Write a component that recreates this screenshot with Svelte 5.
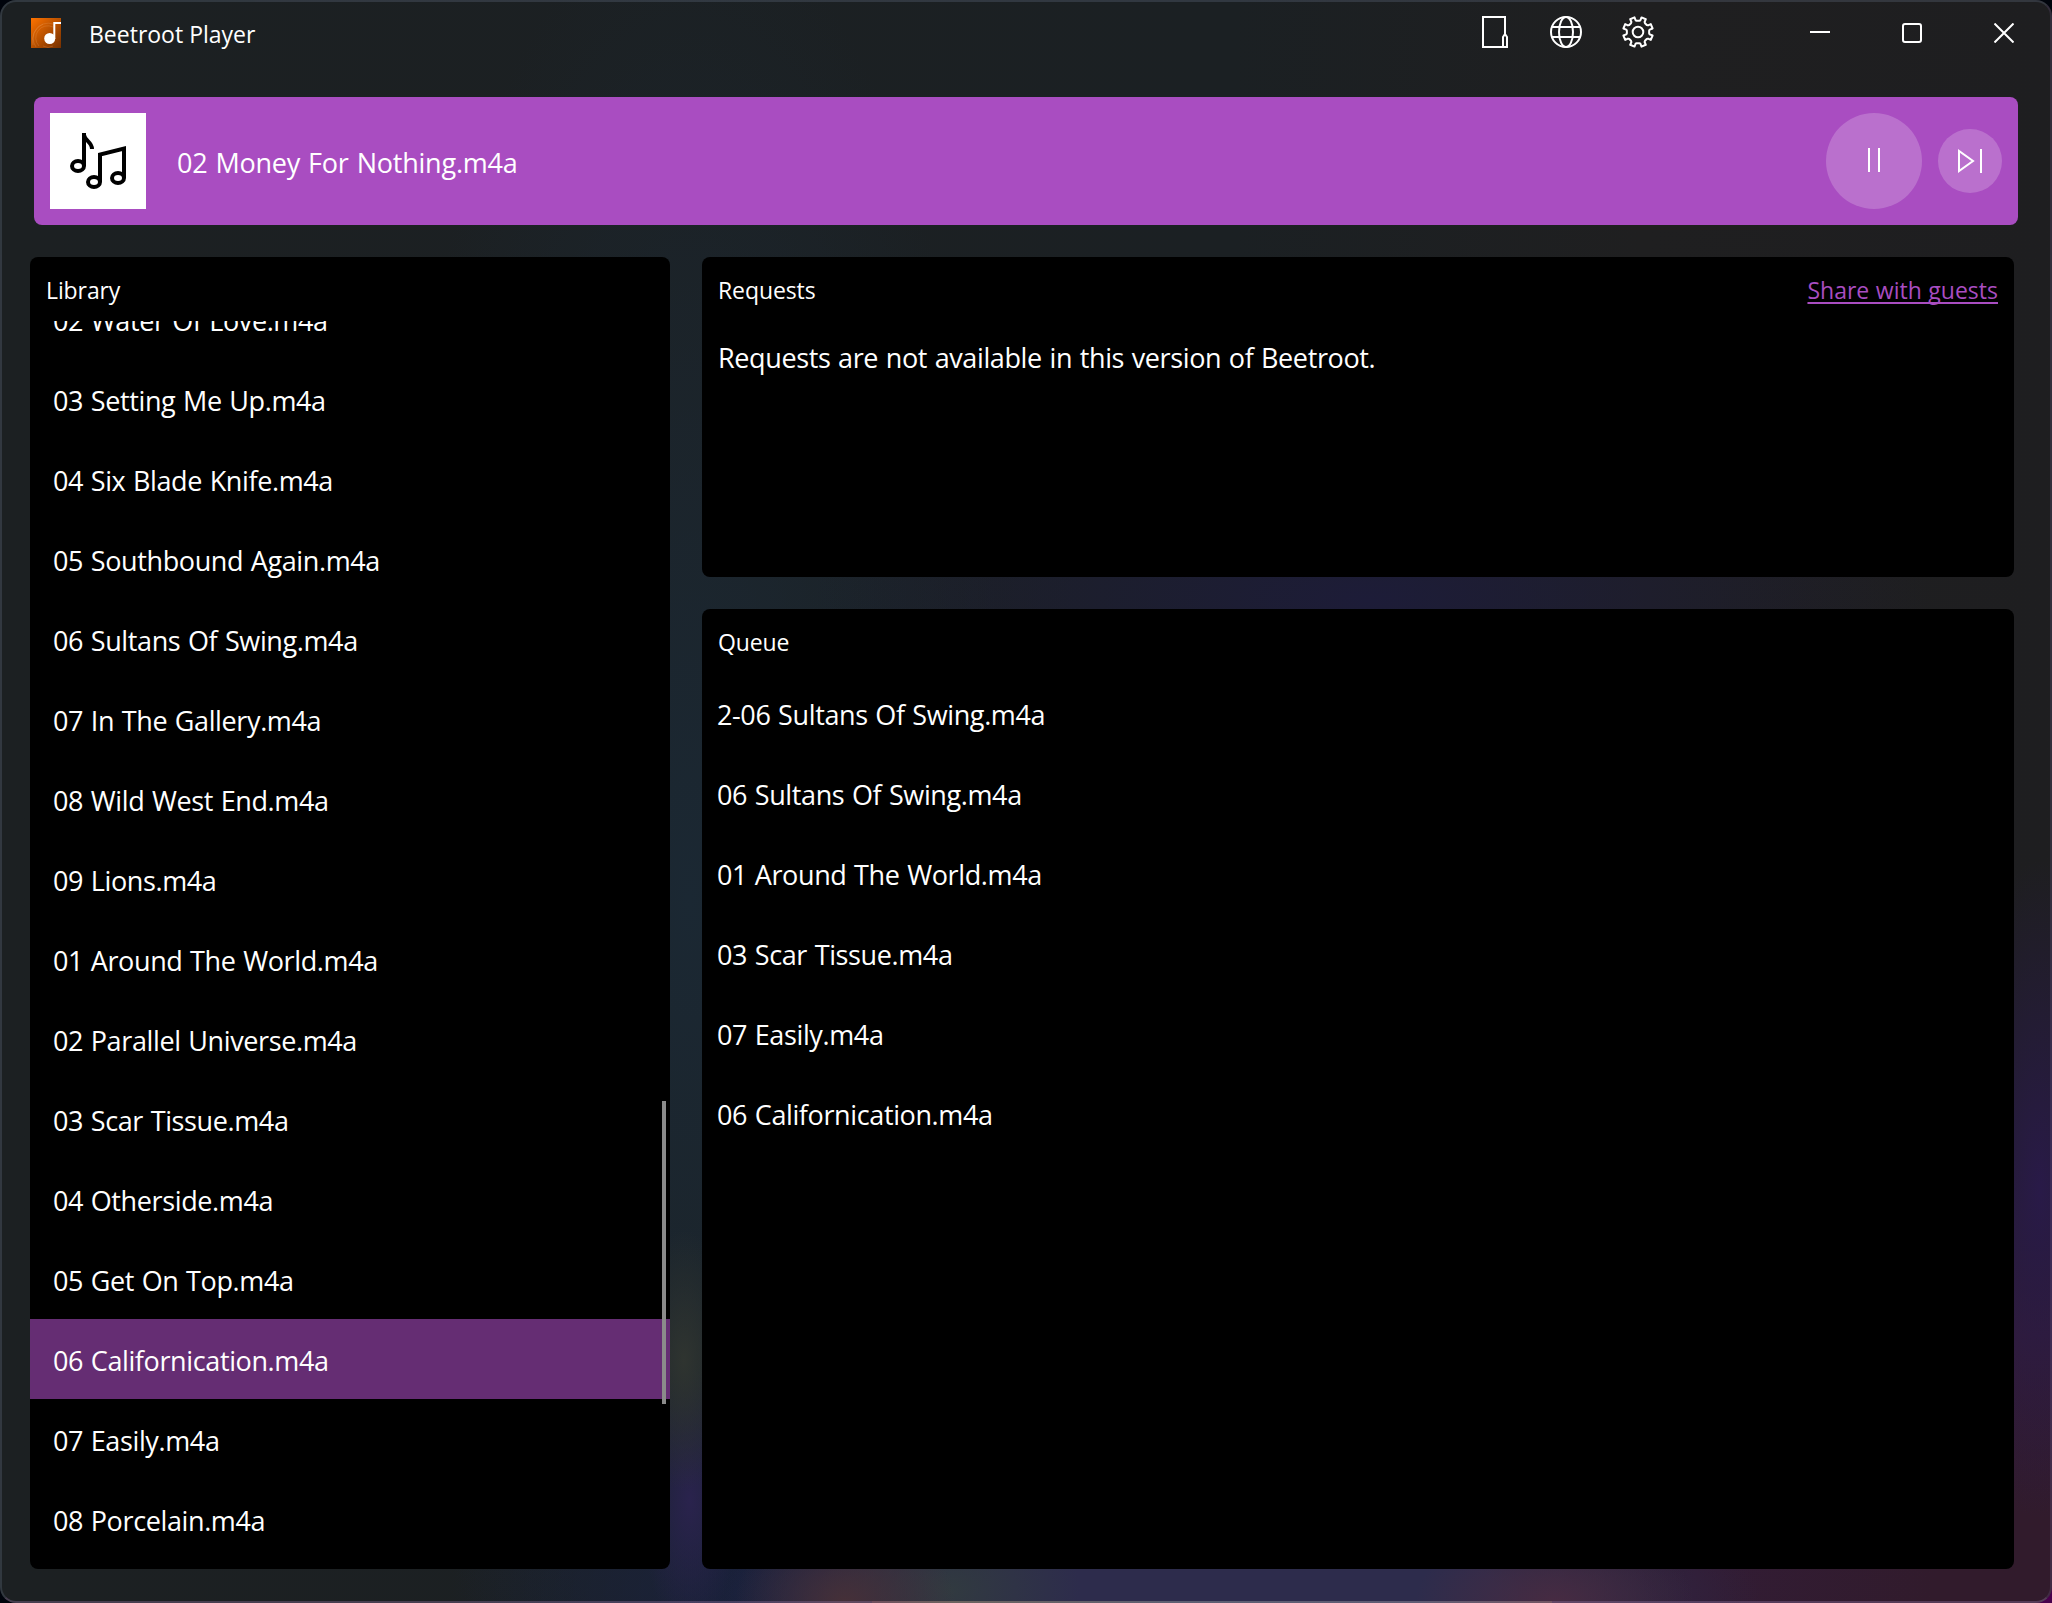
<svelte:options runes={true} />
<script lang="ts">
  const library = [
    "02 Water Of Love.m4a",
    "03 Setting Me Up.m4a",
    "04 Six Blade Knife.m4a",
    "05 Southbound Again.m4a",
    "06 Sultans Of Swing.m4a",
    "07 In The Gallery.m4a",
    "08 Wild West End.m4a",
    "09 Lions.m4a",
    "01 Around The World.m4a",
    "02 Parallel Universe.m4a",
    "03 Scar Tissue.m4a",
    "04 Otherside.m4a",
    "05 Get On Top.m4a",
    "06 Californication.m4a",
    "07 Easily.m4a",
    "08 Porcelain.m4a",
  ];

  let queue = $state([
    "2-06 Sultans Of Swing.m4a",
    "06 Sultans Of Swing.m4a",
    "01 Around The World.m4a",
    "03 Scar Tissue.m4a",
    "07 Easily.m4a",
    "06 Californication.m4a",
  ]);
  let selected = $state(13);
  let playing = $state("02 Money For Nothing.m4a");

  const playNext = (): void => {
    const next = queue.shift();
    if (next) playing = next;
  };

  // cog outline centred on 16,16 with a notch at the top
  const cog = (teeth: number): string => {
    const points: string[] = [];
    const step = (Math.PI * 2) / teeth;
    const shape: [number, number][] = [
      [-0.36, 11.2],
      [-0.24, 12],
      [-0.2, 15],
      [0.2, 15],
      [0.24, 12],
      [0.36, 11.2],
    ];
    for (let i = 0; i < teeth; i++) {
      for (const [offset, radius] of shape) {
        const angle = (i + 0.5 + offset) * step - Math.PI / 2;
        points.push(`${(16 + Math.cos(angle) * radius).toFixed(2)},${(16 + Math.sin(angle) * radius).toFixed(2)}`);
      }
    }
    return points.join(" ");
  };
</script>

<div class="desktop">
  <main class="window">
    <header class="titlebar">
      <svg class="logo" viewBox="0 0 30 30">
        <defs>
          <linearGradient id="logo-fill" x1="0" y1="0" x2="1" y2="1">
            <stop offset="0" stop-color="#ff7300" />
            <stop offset="1" stop-color="#753000" />
          </linearGradient>
        </defs>
        <rect width="30" height="30" fill="url(#logo-fill)" />
        <g fill="none" stroke="#e59a58" stroke-opacity="0.4" stroke-width="0.7">
          <path d="M5 29A15 15 0 0 1 22 6" />
          <path d="M8 28A12 12 0 0 1 22 9" />
          <path d="M2 27A18 18 0 0 1 12 6" />
          <path d="M12 28a10 10 0 0 0 10 0" />
        </g>
        <circle cx="18.7" cy="20.5" r="5.5" fill="#fff" />
        <path d="M23.300 21V5H30" fill="none" stroke="#fff" stroke-width="2" />
      </svg>
      <h1>Beetroot Player</h1>
      <nav class="tools">
        <button aria-label="Mini player">
          <svg viewBox="0 0 32 32">
            <path d="M27 18V1H5v30h24V21l-2-3-2 3v10" />
          </svg>
        </button>
        <button aria-label="Language">
          <svg viewBox="0 0 32 32">
            <circle cx="16" cy="16" r="15" />
            <ellipse cx="16" cy="16" rx="7" ry="15" />
            <path d="M2 11h28M2 21h28" />
          </svg>
        </button>
        <button aria-label="Settings">
          <svg viewBox="0 0 32 32">
            <polygon points={cog(8)} stroke-linejoin="round" />
            <circle cx="16" cy="16" r="5.3" />
          </svg>
        </button>
      </nav>
      <div class="caption">
        <button aria-label="Minimize">
          <svg viewBox="0 0 20 20"><path d="M0 9h20" /></svg>
        </button>
        <button aria-label="Maximize">
          <svg viewBox="0 0 20 20"><rect x="1" y="1" width="18" height="18" rx="2" /></svg>
        </button>
        <button aria-label="Close">
          <svg viewBox="0 0 20 20"><path d="M0.5 0.5l19 19M19.5 0.5l-19 19" /></svg>
        </button>
      </div>
    </header>

    <section class="player">
      <div class="cover">
        <svg viewBox="0 0 96 96">
          <g fill="none" stroke="#000" stroke-width="4">
            <ellipse cx="28" cy="53" rx="6" ry="5" />
            <ellipse cx="44" cy="69" rx="6" ry="5" />
            <ellipse cx="68" cy="65" rx="6" ry="5" />
            <path d="M34 53V20M34 22c1 6 8 7 8 14M50 69V41.500L74 35.500V65" />
          </g>
        </svg>
      </div>
      <span class="track">{playing}</span>
      <button class="round large" aria-label="Pause">
        <svg viewBox="0 0 32 32"><path d="M11 3v24M21 3v24" /></svg>
      </button>
      <button class="round small" aria-label="Next" onclick={playNext}>
        <svg viewBox="0 0 32 32"><path d="M5 6v20l14-10zM27 4v24" /></svg>
      </button>
    </section>

    <div class="columns">
      <section class="panel library">
        <h2>Library</h2>
        <div class="viewport">
          <ul>
            {#each library as song, i}
              <li class:selected={i === selected}>
                <button onclick={() => (selected = i)}>{song}</button>
              </li>
            {/each}
          </ul>
          <div class="thumb"></div>
        </div>
      </section>

      <div class="side">
        <section class="panel requests">
          <div class="heading">
            <h2>Requests</h2>
            <a href="#share">Share with guests</a>
          </div>
          <p>Requests are not available in this version of Beetroot.</p>
        </section>
        <section class="panel queue">
          <h2>Queue</h2>
          <ul>
            {#each queue as song}
              <li>{song}</li>
            {/each}
          </ul>
        </section>
      </div>
    </div>
  </main>
</div>

<style>
  :global(body) {
    margin: 0;
    background: #05060c;
  }
  .desktop {
    position: relative;
    width: 2052px;
    height: 1603px;
    overflow: hidden;
    background: linear-gradient(135deg, #00040c 60%, #48004c);
  }
  /* bright edge of the wallpaper showing along the bottom border */
  .desktop::after {
    content: "";
    position: absolute;
    left: 872px;
    bottom: 0;
    width: 680px;
    height: 2px;
    background: linear-gradient(90deg, #70505e, #6c635f 12%, #5d5f72 45%, #5f5c74 80%, #735563);
  }
  .window {
    box-sizing: border-box;
    height: 100%;
    padding: 0 32px 32px 28px;
    display: flex;
    flex-direction: column;
    border: 2px solid rgba(120, 135, 160, 0.24);
    border-right-color: rgba(120, 100, 150, 0.24);
    border-bottom-color: rgba(150, 120, 165, 0.36);
    border-radius: 16px;
    color: #fff;
    font-family: "Open Sans", "Noto Sans", sans-serif;
    background:
      radial-gradient(ellipse 50px 130px at 684px 1360px, #2f3430, transparent),
      radial-gradient(ellipse 50px 130px at 690px 1500px, #2a234d, transparent),
      radial-gradient(ellipse 110px 90px at 845px 1603px, #463038, transparent),
      radial-gradient(ellipse 130px 100px at 950px 1590px, #313a40, transparent),
      radial-gradient(ellipse 140px 80px at 1555px 1603px, #472b42, transparent),
      radial-gradient(ellipse 520px 160px at 1240px 1600px, #2d2c4c 50%, transparent),
      radial-gradient(ellipse 90px 330px at 2040px 1190px, #291a48, transparent),
      radial-gradient(ellipse 600px 450px at 2052px 1603px, #311b2c 20%, #321c35 60%, transparent),
      radial-gradient(ellipse 560px 190px at 1370px 600px, #1d1c38, transparent),
      radial-gradient(ellipse 400px 260px at 850px 1600px, #192042, transparent),
      radial-gradient(ellipse 320px 1000px at 690px 900px, #1b2833, transparent),
      linear-gradient(90deg, #1c2022 0%, #1b2023 60%, #1f1f20 80%, #1e1e20 100%);
    background-origin: border-box;
  }
  h1,
  h2,
  p,
  ul {
    margin: 0;
    padding: 0;
    font-weight: 400;
  }
  ul {
    list-style: none;
  }
  button {
    padding: 0;
    border: 0;
    background: none;
    color: inherit;
    font: inherit;
    letter-spacing: inherit;
    word-spacing: inherit;
    cursor: pointer;
  }
  svg {
    display: block;
  }
  button svg {
    width: 32px;
    height: 32px;
    fill: none;
    stroke: #fff;
    stroke-width: 2;
  }
  .titlebar {
    flex: none;
    height: 95px;
    display: flex;
    align-items: flex-start;
  }
  .logo {
    width: 30px;
    height: 30px;
    margin: 16px 0 0 1px;
  }
  .titlebar h1 {
    margin: 16px 0 0 28px;
    font-size: 23px;
    line-height: 32px;
    letter-spacing: 0;
  }
  .tools {
    margin: 14px 0 0 auto;
    display: flex;
    gap: 40px;
  }
  .caption {
    margin: 21px -32px 0 120px;
    display: flex;
  }
  .caption button {
    width: 92px;
    display: flex;
    justify-content: center;
  }
  .caption svg {
    width: 20px;
    height: 20px;
  }
  .player {
    flex: none;
    height: 128px;
    box-sizing: border-box;
    margin: 0 0 32px 4px;
    padding: 16px;
    display: flex;
    align-items: center;
    border-radius: 8px;
    background: #a94dc1;
  }
  .cover {
    width: 96px;
    height: 96px;
    background: #fff;
  }
  .track {
    margin: 3px auto 0 31px;
    font-size: 27px;
    letter-spacing: -0.22px;
    word-spacing: 1.2px;
  }
  .round {
    display: grid;
    place-items: center;
    border-radius: 50%;
    background: rgba(255, 255, 255, 0.2);
  }
  .large {
    width: 96px;
    height: 96px;
    margin-right: 16px;
  }
  .small {
    width: 64px;
    height: 64px;
  }
  .columns {
    flex: 1;
    min-height: 0;
    margin-right: 4px;
    display: grid;
    grid-template-columns: 640px 1fr;
    gap: 32px;
  }
  .side {
    display: grid;
    grid-template-rows: 320px 1fr;
    gap: 32px;
  }
  .panel {
    border-radius: 8px;
    background: #000;
    overflow: hidden;
  }
  h2,
  .heading a {
    font-size: 23px;
    line-height: 32px;
    letter-spacing: -0.1px;
  }
  h2 {
    padding: 17px 16px 15px;
  }
  .heading {
    display: flex;
    justify-content: space-between;
  }
  .heading a {
    padding: 17px 16px 0;
    color: #a94dc1;
    letter-spacing: 0;
    word-spacing: 0.6px;
    text-underline-offset: 3px;
    text-decoration-thickness: 2px;
    text-decoration-skip-ink: none;
  }
  .library {
    display: flex;
    flex-direction: column;
  }
  .viewport {
    position: relative;
    flex: 1;
    min-height: 0;
    overflow: hidden;
  }
  .viewport ul {
    margin-top: -42px;
  }
  .thumb {
    position: absolute;
    top: 780px;
    right: 4px;
    width: 4px;
    height: 303px;
    background: #8b8b8b;
  }
  li,
  .requests p {
    font-size: 27px;
    letter-spacing: -0.38px;
    word-spacing: 1px;
  }
  li {
    height: 80px;
    line-height: 84px;
  }
  .viewport li button {
    width: 100%;
    height: 80px;
    padding: 0 23px;
    text-align: left;
  }
  .selected {
    background: #652d73;
  }
  .requests p {
    padding: 17px 16px;
    line-height: 40px;
  }
  .queue li {
    padding: 0 15px;
  }
</style>
